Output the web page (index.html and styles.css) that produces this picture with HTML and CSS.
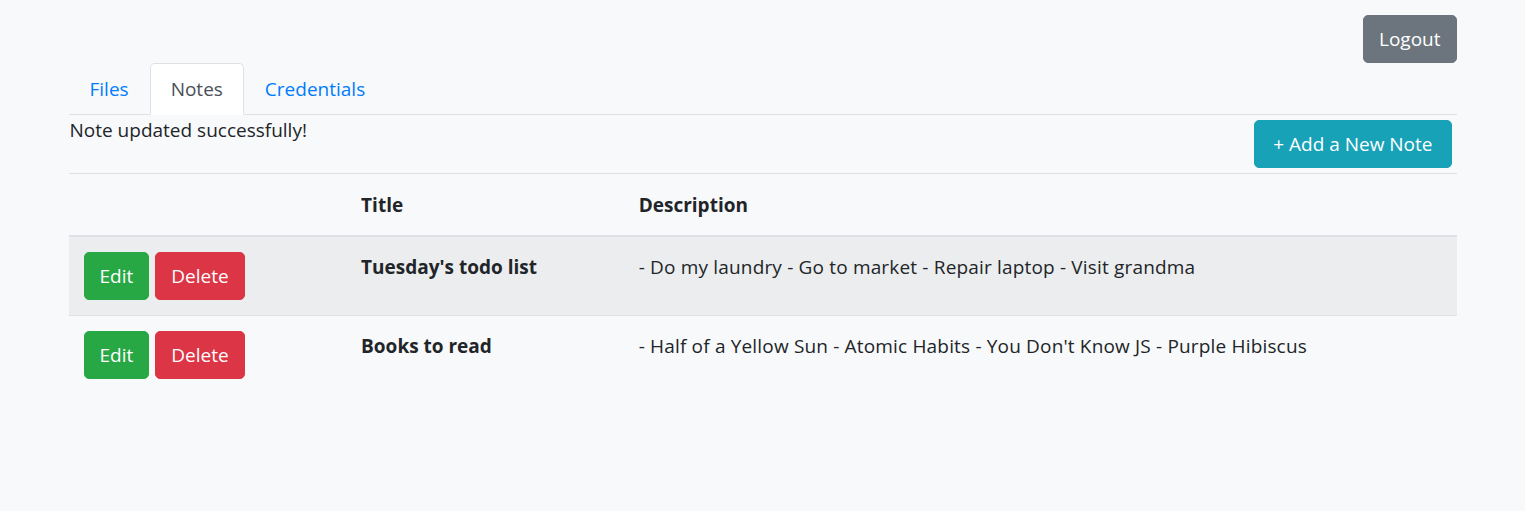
FILE: index.html
```html
<!DOCTYPE html>
<html lang="en">
<head>
<meta charset="utf-8">
<title>Notes</title>
<link rel="stylesheet" href="styles.css">
</head>
<body>
<div class="container">
  <div class="topbar">
    <button class="btn btn-secondary">Logout</button>
  </div>
  <ul class="tabs">
    <li><a class="tab">Files</a></li>
    <li><a class="tab active">Notes</a></li>
    <li><a class="tab">Credentials</a></li>
  </ul>
  <div class="pane">
    <div class="msg-row">
      <span class="msg">Note updated successfully!</span>
      <button class="btn btn-info add">+ Add a New Note</button>
    </div>
    <table class="notes">
      <thead>
        <tr>
          <th class="col-actions"></th>
          <th class="col-title">Title</th>
          <th>Description</th>
        </tr>
      </thead>
      <tbody>
        <tr class="striped">
          <td><div class="actions"><button class="btn btn-success">Edit</button><button class="btn btn-danger">Delete</button></div></td>
          <th>Tuesday's todo list</th>
          <td class="desc">- Do my laundry - Go to market - Repair laptop - Visit grandma</td>
        </tr>
        <tr>
          <td><div class="actions"><button class="btn btn-success">Edit</button><button class="btn btn-danger">Delete</button></div></td>
          <th>Books to read</th>
          <td class="desc">- Half of a Yellow Sun - Atomic Habits - You Don't Know JS - Purple Hibiscus</td>
        </tr>
      </tbody>
    </table>
  </div>
</div>
</body>
</html>
```

FILE: styles.css
```css
* { box-sizing: border-box; }
html, body { margin: 0; padding: 0; }
body {
  background: #f8f9fa;
  color: #212529;
  font-family: "Open Sans", "Noto Sans", sans-serif;
  font-size: 19px;
  line-height: 30px;
}
.container {
  width: 1388px;
  margin: 0 auto;
}
.topbar {
  display: flex;
  justify-content: flex-end;
  padding-top: 15px;
}
.btn {
  font-family: inherit;
  font-size: 19px;
  line-height: 30px;
  padding: 8px 15px;
  border: 1px solid transparent;
  border-radius: 5px;
  color: #fff;
  cursor: pointer;
}
.btn-secondary { background: #6c757d; border-color: #6c757d; }
.btn-info { background: #17a2b8; border-color: #17a2b8; }
.btn-success { background: #28a745; border-color: #28a745; }
.btn-danger { background: #dc3545; border-color: #dc3545; }
.tabs {
  list-style: none;
  margin: 0;
  padding: 0;
  display: flex;
  border-bottom: 1px solid #dee2e6;
}
.tabs li { margin-bottom: -1px; }
.tab {
  display: block;
  padding: 10px 20px;
  border: 1px solid transparent;
  border-radius: 5px 5px 0 0;
  color: #007bff;
}
.tab.active {
  color: #495057;
  background: #fff;
  border-color: #dee2e6 #dee2e6 #fff;
}
.msg-row {
  display: flex;
  justify-content: space-between;
  align-items: flex-start;
}
.msg { padding-left: 1px; }
.add { margin: 5px; padding-left: 18px; padding-right: 18px; }
.notes {
  width: 100%;
  border-collapse: collapse;
}
.notes th, .notes td {
  padding: 15px;
  border-top: 1px solid #dee2e6;
  vertical-align: top;
  text-align: left;
}
.notes th { font-weight: 700; }
.notes thead th { border-bottom: 2px solid #dee2e6; padding-top: 16px; }
.col-actions { width: 20%; }
.col-title { width: 20%; }
.desc { letter-spacing: 0.17px; }
.striped { background: #ecedee; }
.actions { display: flex; gap: 6px; }
```
